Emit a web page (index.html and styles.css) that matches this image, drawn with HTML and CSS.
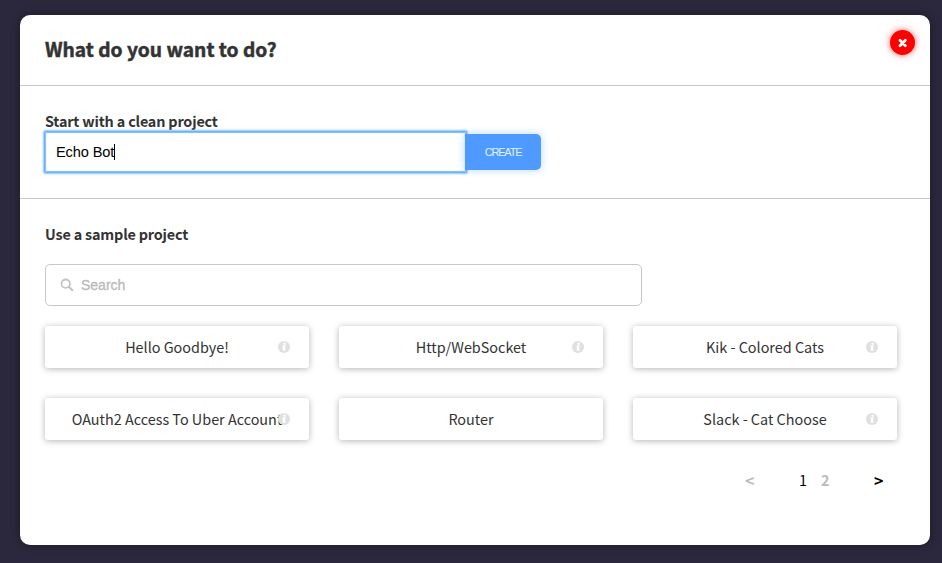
FILE: index.html
```html
<!DOCTYPE html>
<html lang="en">
<head>
<meta charset="utf-8">
<title>New project</title>
<link rel="stylesheet" href="styles.css">
</head>
<body>
<svg class="defs" width="0" height="0" aria-hidden="true">
  <symbol id="info" viewBox="0 0 12 12">
    <circle cx="6" cy="6" r="6" fill="#dfe0e2"/>
    <circle cx="6.6" cy="2.7" r="1.25" fill="#fff"/>
    <path d="M4.3 4.4h3.3L7 8.2h.9l-.2 1.2H4.5L5 5.5h-.9z" fill="#fff"/>
  </symbol>
</svg>
<main class="modal">
  <header class="head">
    <h1 class="title">What do you want to do?</h1>
    <button class="close" aria-label="Close"><svg width="10" height="10" viewBox="0 0 10 10"><path d="M2 2.3l5.4 5.4M7.4 2.3l-5.4 5.4" stroke="#fff" stroke-width="2.8" stroke-linecap="round"/></svg></button>
  </header>
  <section class="clean">
    <h2 class="label">Start with a clean project</h2>
    <div class="create-row">
      <div class="name-input"><span class="name-text">Echo Bot</span><span class="caret"></span></div>
      <button class="create"><span>CREATE</span></button>
    </div>
  </section>
  <section class="samples">
    <h2 class="label">Use a sample project</h2>
    <div class="search">
      <svg width="14" height="14" viewBox="0 0 14 14" fill="none" stroke="#c4c4c4"><circle cx="5.7" cy="5.7" r="4.2" stroke-width="1.8"/><path d="M9 9l3.4 3.2" stroke-width="2.2" stroke-linecap="round"/></svg>
      <span>Search</span>
    </div>
    <div class="grid">
      <div class="card"><span>Hello Goodbye!</span><svg class="info"><use href="#info"/></svg></div>
      <div class="card"><span>Http/WebSocket</span><svg class="info"><use href="#info"/></svg></div>
      <div class="card"><span>Kik - Colored Cats</span><svg class="info"><use href="#info"/></svg></div>
      <div class="card"><span>OAuth2 Access To Uber Account</span><svg class="info"><use href="#info"/></svg></div>
      <div class="card"><span>Router</span></div>
      <div class="card"><span>Slack - Cat Choose</span><svg class="info"><use href="#info"/></svg></div>
    </div>
    <nav class="pager">
      <span class="prev">&lt;</span>
      <span class="page">1</span>
      <span class="page off">2</span>
      <span class="next">&gt;</span>
    </nav>
  </section>
</main>
</body>
</html>
```

FILE: styles.css
```css
* { box-sizing: border-box; }
body {
  margin: 0;
  height: 563px;
  padding: 15px 12px 18px 20px;
  overflow: hidden;
  background: #2b283d;
  color: #333;
  font-family: "Noto Sans CJK SC", "Noto Sans", sans-serif;
}
.defs { position: absolute; }
button { border: 0; padding: 0; }
.modal {
  height: 530px;
  background: #fff;
  border-radius: 10px;
  box-shadow: 0 0 8px rgba(0, 0, 0, .4);
}
.head {
  display: flex;
  justify-content: space-between;
  height: 71px;
  padding: 15px 15px 0 25px;
  border-bottom: 1px solid #c8c8c8;
}
.title {
  margin: 0;
  font-size: 19.2px;
  line-height: 38px;
  font-weight: 700;
  -webkit-text-stroke: .5px #333;
  white-space: nowrap;
}
.close {
  display: flex;
  align-items: center;
  justify-content: center;
  width: 25px;
  height: 25px;
  border-radius: 50%;
  background: #f00;
  box-shadow: 0 0 7px rgba(255, 0, 0, .6);
}
.clean {
  height: 113px;
  padding: 25px 25px 0;
  border-bottom: 1px solid #c8c8c8;
}
.label {
  margin: 0;
  font-size: 14.4px;
  line-height: 20px;
  font-weight: 700;
  letter-spacing: -.18px;
  white-space: nowrap;
}
.create-row { display: flex; align-items: center; height: 40px; margin-top: 1px; }
.name-input {
  display: flex;
  align-items: center;
  width: 421px;
  height: 40px;
  padding: 0 0 1px 11px;
  background: #fff;
  color: #000;
  font: 14.6px "Liberation Sans", sans-serif;
  border-radius: 1px;
  box-shadow: 0 0 0 1px #6fb1f6, 0 0 2px 2px #8cc3fa, inset 0 0 1px 1px #7ebafa;
}
.name-text { letter-spacing: -.13px; }
.caret { width: 1px; height: 16px; background: #000; }
.create {
  position: relative;
  width: 76px;
  height: 36px;
  margin-left: -1px;
  border-radius: 0 5px 5px 0;
  background: #4e9aff;
  color: #e4f0ff;
  font: 11px "Liberation Sans", sans-serif;
  letter-spacing: -1.2px;
  box-shadow: 0 0 8px rgba(78, 154, 255, .4);
}
.samples { padding: 25px 33px 0 25px; }
.search {
  display: flex;
  align-items: center;
  gap: 7px;
  width: 597px;
  height: 42px;
  margin-top: 20px;
  padding-left: 14px;
  border: 1px solid #c8c8c8;
  border-radius: 5px;
  color: #b9b9b9;
  font: 14px "Liberation Sans", sans-serif;
  -webkit-text-stroke: .3px #b9b9b9;
}
.grid {
  display: grid;
  grid-template-columns: repeat(3, 264px);
  grid-auto-rows: 42px;
  gap: 30px;
  margin-top: 20px;
}
.card {
  position: relative;
  display: flex;
  align-items: center;
  justify-content: center;
  border-radius: 3px;
  font-size: 14.4px;
  line-height: 20px;
  white-space: nowrap;
  box-shadow: 0 1px 6px rgba(43, 40, 61, .35);
}
.info {
  position: absolute;
  top: 15px;
  right: 19px;
  width: 12px;
  height: 12px;
}
.pager {
  display: flex;
  margin-top: 30px;
  padding-left: 700px;
  font-size: 14.4px;
  line-height: 20px;
  color: #000;
}
.prev, .next { font-size: 16px; font-weight: 700; }
.prev { width: 54px; color: #bbb; }
.page { width: 22px; }
.off { width: 53px; color: #bbb; font-weight: 700; }
```
